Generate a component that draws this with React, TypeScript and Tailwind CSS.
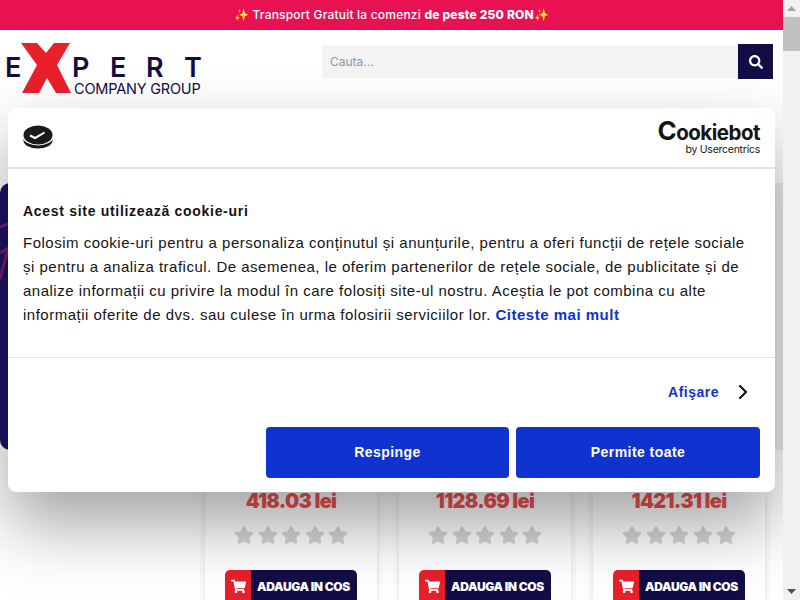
import React from 'react';
import { ChevronRight } from 'lucide-react';
import { FaSearch, FaShoppingCart, FaStar } from 'react-icons/fa';

const poppins = "font-['Inter',sans-serif]";
const cookieFont = "font-['Liberation_Sans',Arial,sans-serif]";

const Logo = () => (
  <div className={`relative w-[202px] h-[54px] ml-[5px] text-[#120d45] ${poppins}`}>
    <svg viewBox="0 0 50 50" className="absolute left-[16px] top-0 w-[50px] h-[50px]">
      <polygon fill="#e8202a" points="0,0 16,0 25,10 33,0 49,0 36,22 50,50 35,50 26,35 18,50 1,50 16,22" />
    </svg>
    <span className="absolute left-0 top-[10px] text-[27px] leading-[30px] font-semibold">E</span>
    <div className="absolute left-[67px] top-[10px] flex text-[27px] leading-[30px] font-semibold">
      <span className="w-[38px]">P</span>
      <span className="w-[36px]">E</span>
      <span className="w-[39px]">R</span>
      <span className="ml-[-1px]">T</span>
    </div>
    <span className="absolute left-[69px] top-[37px] text-[14.5px] leading-[17px] whitespace-nowrap tracking-[-0.2px]">COMPANY GROUP</span>
  </div>
);

const products = ['418.03 lei', '1128.69 lei', '1421.31 lei'];

const ProductCard = ({ price }: { price: string }) => (
  <div className="h-[180px] flex flex-col items-center bg-white shadow-[0_0_8px_rgba(0,0,0,0.12)]">
    <div className={`text-[20px] leading-[26px] font-black text-[#f05053] tracking-[-0.7px] ${poppins}`}>{price}</div>
    <div className="flex gap-[3.5px] mt-[11px] text-[#d6d6d6]">
      {[0, 1, 2, 3, 4].map((i) => (
        <FaStar key={i} size={20} />
      ))}
    </div>
    <div className="flex mt-[25px] w-[132px] h-[40px] rounded-[5px] overflow-hidden shrink-0">
      <div className="w-[26px] bg-[#e8202a] flex items-start pt-[9px] justify-center text-white">
        <FaShoppingCart size={15} />
      </div>
      <div className={`flex-1 bg-[#120d45] text-white text-[12px] font-black pt-[8px] pl-[6px] tracking-[-0.35px] whitespace-nowrap ${poppins}`}>
        ADAUGA IN COS
      </div>
    </div>
  </div>
);

const CookieDialog = () => (
  <div className={`absolute left-[8px] top-[108px] w-[767px] h-[384px] bg-white rounded-[8px] shadow-[0_32px_68px_rgba(0,0,0,0.37)] flex flex-col text-[#141414] ${cookieFont}`}>
    <div className="h-[61px] shrink-0 border-b-2 border-[#e4e4e4] flex items-center justify-between pl-[15px] pr-[15px]">
      <svg viewBox="0 0 30 24" className="w-[30px] h-[24px] mt-[-1px]">
        <ellipse cx="15" cy="15.5" rx="14.5" ry="8" fill="#1a1a1a" />
        <ellipse cx="15" cy="12" rx="15" ry="8.4" fill="#fff" />
        <ellipse cx="15" cy="10" rx="14.5" ry="9.5" fill="#1a1a1a" />
        <path d="M7 10.5 L12 13 L21.5 7.5 M12 13 L16 10.5" stroke="#fff" strokeWidth="2" fill="none" />
      </svg>
      <div className="flex flex-col items-end font-['Inter',sans-serif] text-[#141414]">
        <span className="leading-[22px] font-bold text-[20.5px] tracking-[-0.5px]">
          <span className="text-[26px] leading-[22px] font-bold">C</span>ookiebot
        </span>
        <span className="text-[10.5px] leading-[12px] tracking-[-0.25px]">by Usercentrics</span>
      </div>
    </div>
    <div className="h-[189px] shrink-0 border-b border-[#e0e0e0] pl-[15px] pr-[15px] pt-[33px]">
      <div className="text-[14px] leading-[18px] font-bold tracking-[0.7px]">Acest site utilizează cookie-uri</div>
      <p className="mt-[11px] text-[15px] leading-[24px] tracking-[0.5px] text-[#141414] whitespace-nowrap">
        Folosim cookie-uri pentru a personaliza conținutul și anunțurile, pentru a oferi funcții de rețele sociale<br />
        și pentru a analiza traficul. De asemenea, le oferim partenerilor de rețele sociale, de publicitate și de<br />
        analize informații cu privire la modul în care folosiți site-ul nostru. Aceștia le pot combina cu alte<br />
        informații oferite de dvs. sau culese în urma folosirii serviciilor lor.{' '}
        <span className="font-bold text-[#1032cf]">Citeste mai mult</span>
      </p>
    </div>
    <div className="flex justify-end items-center pr-[20px] pt-[22px] gap-[12px]">
      <span className="text-[14px] leading-[24px] font-bold text-[#1032cf] tracking-[0.5px]">Afişare</span>
      <ChevronRight size={24} strokeWidth={2.2} className="text-[#141414]" />
    </div>
    <div className="flex gap-[7px] pl-[258px] pr-[15px] mt-[23px]">
      <button className="w-[243px] h-[51px] bg-[#1032cf] rounded-[4px] text-white text-[14px] font-bold tracking-[0.45px]">Respinge</button>
      <button className="w-[244px] h-[51px] bg-[#1032cf] rounded-[4px] text-white text-[14px] font-bold tracking-[0.45px]">Permite toate</button>
    </div>
  </div>
);

const Scrollbar = () => (
  <div className="w-[17px] shrink-0 bg-[#f1f1f1] flex flex-col items-center justify-between">
    <div className="w-full flex flex-col items-center">
      <div className="h-[17px] flex items-center justify-center">
        <svg viewBox="0 0 9 5" className="w-[9px] h-[5px]"><polygon points="4.5,0 9,5 0,5" fill="#a3a3a3" /></svg>
      </div>
      <div className="w-full h-[34px] bg-[#c1c1c1]" />
    </div>
    <div className="h-[17px] flex items-center justify-center">
      <svg viewBox="0 0 9 5" className="w-[9px] h-[5px]"><polygon points="0,0 9,0 4.5,5" fill="#505050" /></svg>
    </div>
  </div>
);

export default function App() {
  return (
    <div className="w-[800px] h-[600px] overflow-hidden flex bg-white">
      <div className="relative flex-1 min-w-0 flex flex-col overflow-hidden">
        <div className={`h-[30px] shrink-0 bg-[#e81253] flex items-center justify-center text-white text-[12px] font-medium tracking-[0.2px] ${poppins}`}>
          <span>✨ Transport Gratuit la comenzi <b className="font-extrabold">de peste 250 RON</b>✨</span>
        </div>
        <div className="h-[75px] shrink-0 flex items-start pt-[13px] justify-between pr-[10px]">
          <Logo />
          <div className="flex items-start mt-[1px]">
            <div className={`w-[416px] h-[33px] mt-[1px] bg-[#f4f4f4] text-[12px] leading-[33px] pl-[8px] text-[#8a94a6] ${poppins}`}>Cauta...</div>
            <div className="w-[35px] h-[35px] bg-[#120d45] flex items-center justify-center text-white">
              <FaSearch size={14} />
            </div>
          </div>
        </div>
        <div className="flex-1 flex flex-col">
          <div className="mt-[78px] h-[267px] shrink-0 flex">
            <div className="flex-1 bg-[#1a1466] rounded-l-[10px] overflow-hidden relative">
              <svg viewBox="0 0 10 267" className="absolute left-0 top-0 w-[10px] h-[267px]">
                <path d="M0 44 L10 40 M0 70 L10 64 M0 96 L8 66" stroke="#7a1a6a" strokeWidth="3" fill="none" />
              </svg>
            </div>
            <div className="w-[8px] bg-[#eeeeee]" />
          </div>
          <div className="mt-[38px] ml-[205px] w-[560px] grid grid-cols-3 gap-[22px]">
            {products.map((p) => (
              <ProductCard key={p} price={p} />
            ))}
          </div>
        </div>
        <CookieDialog />
      </div>
      <Scrollbar />
    </div>
  );
}
